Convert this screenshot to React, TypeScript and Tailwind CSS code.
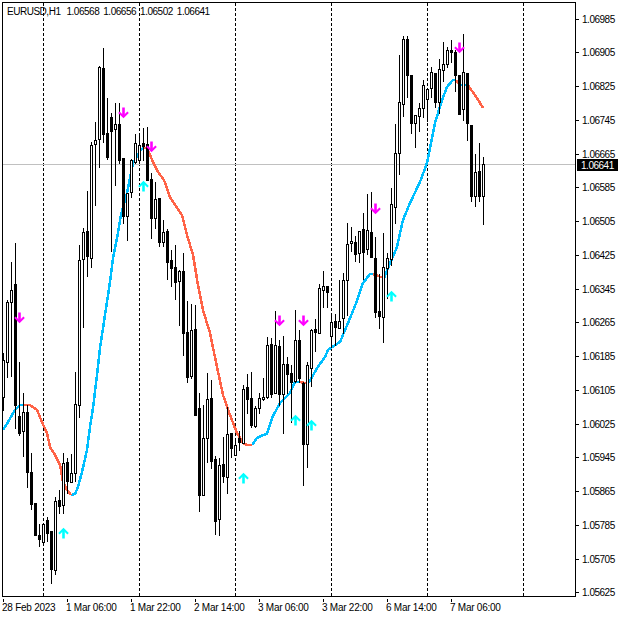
const font = "[font-family:'Liberation_Sans',Arial,sans-serif]";

// high, body top, body bottom, low, 1 = bull (hollow). One bar every 4px starting at x=3
const bars: number[][] = [
  [353, 360, 397, 410, 1], [300, 302, 362, 377, 1], [262, 290, 302, 376, 1], [243, 284, 405, 428, 0],
  [362, 416, 433, 435, 0], [393, 412, 431, 456, 1], [405, 412, 472, 487, 0], [453, 472, 504, 509, 0],
  [503, 503, 535, 535, 0], [524, 535, 539, 546, 0], [523, 524, 542, 545, 1], [517, 520, 533, 541, 0],
  [531, 531, 569, 583, 0], [497, 501, 570, 574, 1], [490, 500, 506, 513, 0], [453, 463, 505, 513, 1],
  [458, 462, 481, 493, 0], [454, 473, 482, 482, 1], [372, 404, 473, 481, 1], [245, 260, 405, 417, 1],
  [228, 232, 259, 327, 1], [191, 231, 256, 276, 0], [142, 145, 258, 267, 1], [122, 140, 144, 205, 1],
  [66, 67, 139, 167, 1], [48, 68, 134, 142, 0], [98, 133, 157, 159, 0], [113, 117, 131, 251, 0],
  [103, 124, 129, 185, 1], [103, 124, 160, 163, 0], [158, 158, 216, 223, 0], [193, 193, 216, 240, 1],
  [159, 160, 192, 197, 1], [134, 143, 162, 163, 1], [134, 145, 160, 163, 1], [128, 143, 146, 160, 0],
  [127, 144, 180, 180, 0], [173, 179, 218, 238, 0], [182, 199, 218, 228, 1], [198, 198, 242, 246, 0],
  [220, 232, 242, 246, 1], [229, 231, 262, 279, 0], [250, 260, 268, 286, 0], [245, 267, 282, 299, 0],
  [270, 271, 281, 325, 1], [253, 271, 333, 355, 0], [301, 332, 377, 382, 0], [304, 330, 376, 378, 1],
  [305, 329, 415, 415, 0], [393, 408, 495, 511, 0], [405, 438, 495, 495, 1], [373, 399, 438, 462, 1],
  [380, 398, 461, 468, 0], [456, 459, 521, 534, 0], [458, 465, 519, 535, 1], [437, 464, 476, 482, 0],
  [407, 434, 477, 493, 1], [433, 433, 448, 457, 0], [440, 445, 455, 455, 1], [431, 438, 442, 450, 0],
  [385, 389, 443, 443, 1], [374, 387, 399, 413, 0], [372, 398, 425, 427, 0], [406, 408, 426, 427, 1],
  [393, 398, 408, 413, 1], [378, 397, 399, 400, 1], [337, 345, 397, 398, 1], [338, 344, 394, 397, 0],
  [311, 345, 393, 393, 1], [340, 346, 394, 405, 0], [336, 364, 394, 433, 1], [357, 364, 374, 393, 0],
  [365, 373, 382, 422, 0], [310, 340, 381, 382, 1], [330, 340, 378, 382, 0], [382, 383, 444, 485, 0],
  [362, 365, 444, 467, 1], [329, 330, 368, 386, 1], [319, 329, 332, 351, 0], [284, 288, 333, 333, 1],
  [271, 286, 290, 307, 1], [286, 286, 292, 307, 0], [315, 322, 336, 347, 1], [314, 321, 327, 345, 0],
  [280, 321, 328, 328, 1], [273, 280, 318, 333, 1], [223, 244, 280, 315, 1], [227, 241, 243, 251, 1],
  [236, 242, 254, 261, 0], [231, 231, 253, 262, 1], [213, 229, 252, 279, 0], [194, 230, 249, 254, 1],
  [192, 232, 257, 257, 0], [237, 258, 312, 317, 0], [274, 311, 316, 328, 0], [233, 267, 317, 342, 1],
  [253, 258, 268, 298, 1], [188, 204, 259, 265, 1], [124, 153, 207, 223, 1], [55, 102, 153, 174, 1],
  [36, 39, 104, 116, 1], [36, 39, 75, 97, 0], [75, 75, 123, 133, 0], [115, 115, 123, 147, 1],
  [103, 108, 116, 131, 1], [80, 85, 108, 117, 1], [89, 89, 99, 121, 1], [67, 72, 88, 97, 1],
  [73, 73, 102, 107, 0], [59, 69, 102, 113, 1], [42, 64, 70, 81, 1], [47, 50, 64, 67, 1],
  [40, 50, 52, 62, 0], [50, 52, 75, 91, 0], [75, 75, 114, 114, 0], [34, 72, 109, 120, 1],
  [73, 73, 123, 140, 0], [125, 125, 196, 201, 0], [154, 172, 196, 206, 1], [143, 171, 196, 201, 0],
  [157, 164, 196, 224, 1],
];

const blue1 = "3,430 8,422 15,410 20,405 24,405";
const red1 = "24,405 30,405 37,410 42,422 47,433 50,447 55,455 60,465 63,482 67,490 71,495";
const blue2 = "71,495 75,494 78,487 82,472 87,450 90,427 93,408 97,375 100,348 105,315 110,282 113,258 117,238 121,215 127,193 133,163 140,151 143,148";
const red2 = "143,148 147,148 153,162 158,172 164,180 170,197 175,205 182,215 187,235 193,255 198,285 203,310 210,333 217,367 223,395 230,415 237,433 243,443 247,445 252,445";
const blue3 = "252,445 257,438 263,435 267,434 272,418 280,403 290,393 295,382 299,382";
const red3 = "299,382 306,383";
const blue4 = "306,383 310,381 317,368 325,357 328,350 340,342 348,323 357,301 363,283 370,274 373,274";
const red4 = "373,274 378,276 384,278";
const blue5 = "384,278 388,268 397,247 403,220 410,203 420,182 427,163 435,123 442,100 447,87 453,80 456,80";
const red5 = "456,80 460,85";
const blue6 = "460,85 468,85";
const red6 = "468,85 472,91 477,98 483,108";

const ups = [[63, 533], [143, 186], [243, 478], [295, 420], [311, 425], [391, 296]];
const downs = [[19, 318], [123, 113], [151, 147], [279, 321], [303, 321], [375, 209], [459, 48]];

const prices = [
  "1.06985", "1.06905", "1.06825", "1.06745", "1.06665", "1.06585", "1.06505", "1.06425", "1.06345",
  "1.06265", "1.06185", "1.06105", "1.06025", "1.05945", "1.05865", "1.05785", "1.05705", "1.05625",
];
const times = [
  "28 Feb 2023", "1 Mar 06:00", "1 Mar 22:00", "2 Mar 14:00", "3 Mar 06:00", "3 Mar 22:00", "6 Mar 14:00", "7 Mar 06:00",
];
const ohlc = ["1.06568", "1.06656", "1.06502", "1.06641"];

function Arrow({ x, y, up, color }: { x: number; y: number; up: boolean; color: string }) {
  const d = up ? 1 : -1;
  const cx = x + 0.5;
  return (
    <g>
      <line x1={cx} x2={cx} y1={y - 4 * d} y2={y + 5.5 * d} stroke={color} strokeWidth={2.6} />
      <polyline
        points={`${cx - 4.6},${y + 0.8 * d} ${cx},${y - 3.8 * d} ${cx + 4.6},${y + 0.8 * d}`}
        fill="none"
        stroke={color}
        strokeWidth={2}
      />
    </g>
  );
}

function Chart() {
  return (
    <svg width={572} height={593} viewBox="3 3 572 593" className="block">
      {/* period separators */}
      {[43, 139, 235, 331, 427, 523].map((x) => (
        <line key={x} x1={x + 0.5} x2={x + 0.5} y1={3} y2={596} stroke="#000" strokeDasharray="3 2" shapeRendering="crispEdges" />
      ))}
      <rect x={3} y={164} width={572} height={1} fill="#c0c0c0" />

      {/* moving average, drawn under the bars */}
      <g fill="none" strokeWidth={2.5} shapeRendering="crispEdges">
        {[blue1, blue2, blue3, blue4, blue5, blue6].map((p) => (
          <polyline key={p} points={p} stroke="#00bfff" />
        ))}
        {[red1, red2, red3, red4, red5, red6].map((p) => (
          <polyline key={p} points={p} stroke="#ff6347" />
        ))}
      </g>

      {bars.map(([high, top, bottom, low, bull], i) => {
        const x = 3 + 4 * i;
        return (
          <g key={i} shapeRendering="crispEdges">
            <rect x={x} y={high} width={1} height={low - high + 1} fill="#000" />
            <rect x={x - 1} y={top} width={3} height={bottom - top + 1} fill="#000" />
            {bull === 1 && bottom - top > 1 && (
              <rect x={x} y={top + 1} width={1} height={bottom - top - 1} fill="#fff" />
            )}
          </g>
        );
      })}

      {ups.map(([x, y]) => (
        <Arrow key={x} x={x} y={y} up color="#00ffff" />
      ))}
      {downs.map(([x, y]) => (
        <Arrow key={x} x={x} y={y} up={false} color="#ff00ff" />
      ))}
    </svg>
  );
}

export default function App() {
  return (
    <div className={`w-[621px] h-[617px] bg-white overflow-hidden text-black text-[10px] tracking-[-0.48px] ${font}`}>
      <div className="flex pl-[2px] pt-[2px]">
        <div className="relative border border-black w-[574px] h-[595px]">
          <Chart />
          <div className="absolute left-[4px] top-[3px] flex gap-[4px] leading-3 whitespace-nowrap">
            <span className="mr-[2px]">EURUSD,H1</span>
            {ohlc.map((v, i) => (
              <span key={i}>{v}</span>
            ))}
          </div>
        </div>
        <div className="relative flex flex-col justify-between w-[45px] h-[586px] mt-[11px]">
          {prices.map((p) => (
            <div key={p} className="flex items-center gap-[2px] h-3 leading-3">
              <div className="w-[3px] h-px bg-black" />
              <span className="pl-px pt-px">{p}</span>
            </div>
          ))}
          <div className="absolute left-[1px] top-[146px] w-[41px] h-3 bg-black text-white leading-3 pl-[4px] pt-px">1.06641</div>
        </div>
      </div>
      <div className="flex pl-[3px] tracking-[-0.25px]">
        {times.map((t) => (
          <div key={t} className="w-16 shrink-0">
            <div className="w-px h-[3px] bg-black" />
            <div className="-ml-px leading-3 whitespace-nowrap">{t}</div>
          </div>
        ))}
      </div>
    </div>
  );
}
